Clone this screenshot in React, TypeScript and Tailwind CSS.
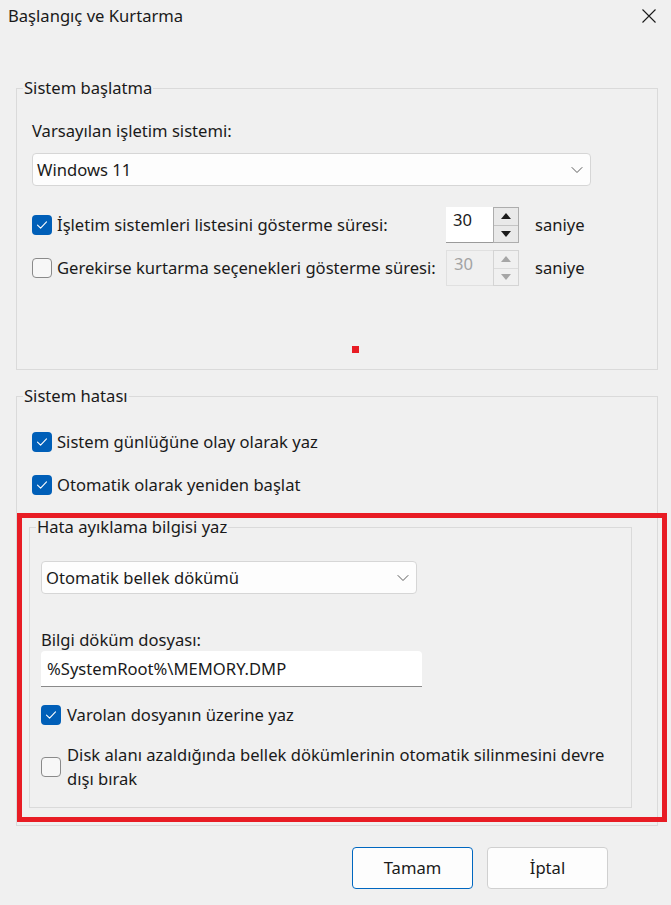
import React from "react";

function CheckBox({ checked }: { checked: boolean }) {
  if (checked) {
    return (
      <span className="flex h-[20px] w-[20px] shrink-0 items-center justify-center rounded-[4px] bg-[#005fb8]">
        <svg width="12" height="10" viewBox="0 0 12 10" fill="none">
          <path d="M1.5 5.2 L4.6 8.2 L10.5 1.8" stroke="#ffffff" strokeWidth="1.1" strokeLinecap="round" strokeLinejoin="round" />
        </svg>
      </span>
    );
  }
  return <span className="block h-[20px] w-[20px] shrink-0 rounded-[4px] border border-[#8a8a8a] bg-[#f7f7f7]" />;
}

function Chevron() {
  return (
    <svg width="12" height="8" viewBox="0 0 12 8" fill="none">
      <path d="M1 1.5 L6 6.5 L11 1.5" stroke="#5c5c5c" strokeWidth="1" strokeLinecap="round" strokeLinejoin="round" />
    </svg>
  );
}

function ComboBox({ value, width }: { value: string; width: string }) {
  return (
    <div className={`${width} flex h-[33px] items-center justify-between rounded-[4px] border border-[#d6d6d6] bg-[#fdfdfd] pl-[4px] pr-[7px]`}>
      <span>{value}</span>
      <Chevron />
    </div>
  );
}

function Spinner({ value, disabled }: { value: string; disabled?: boolean }) {
  const arrow = disabled ? "#a6a6a6" : "#1a1a1a";
  return (
    <div className="flex h-[36px]">
      <div
        className={`flex h-full w-[47px] items-start pl-[7px] pt-[2px] ${
          disabled ? "border border-r-0 border-[#e0e0e0] bg-[#f0f0f0] text-[#a3a3a3]" : "border-b border-[#9a9a9a] bg-white"
        }`}
      >
        {value}
      </div>
      <div className={`flex w-[26px] flex-col border ${disabled ? "border-[#d4d4d4]" : "border-[#adadad]"}`}>
        <div className={`flex flex-1 items-center justify-center border-b ${disabled ? "border-[#dcdcdc] bg-[#f0f0f0]" : "border-[#c4c4c4] bg-[#e9e9e9]"}`}>
          <svg width="10" height="6" viewBox="0 0 10 6">
            <path d="M0 6 L5 0 L10 6 Z" fill={arrow} />
          </svg>
        </div>
        <div className={`flex flex-1 items-center justify-center ${disabled ? "bg-[#f0f0f0]" : "bg-[#e9e9e9]"}`}>
          <svg width="10" height="6" viewBox="0 0 10 6">
            <path d="M0 0 L5 6 L10 0 Z" fill={arrow} />
          </svg>
        </div>
      </div>
    </div>
  );
}

export default function App() {
  return (
    <div className="relative h-[905px] w-[671px] overflow-hidden bg-[#f0f0f0] font-['Noto_Sans',sans-serif] text-[16.6px] leading-[22px] text-[#1a1a1a]">
      {/* title bar */}
      <div className="flex h-[31px] items-center justify-between pl-[8px] pr-[14px]">
        <span>Başlangıç ve Kurtarma</span>
        <svg width="16" height="16" viewBox="0 0 16 16" fill="none">
          <path d="M1.5 1.5 L14.5 14.5 M14.5 1.5 L1.5 14.5" stroke="#1a1a1a" strokeWidth="1.1" />
        </svg>
      </div>

      {/* Sistem başlatma */}
      <fieldset className="ml-[16px] mt-[46px] w-[642px] border border-[#dadada]">
        <legend className="ml-[6px] px-[1px] leading-[22px]">Sistem başlatma</legend>
        <div className="pl-[15px] pb-[16px]">
          <div className="mt-[21px] h-[22px]">Varsayılan işletim sistemi:</div>
          <div className="mt-[11px]">
            <ComboBox value="Windows 11" width="w-[559px]" />
          </div>
          <div className="mt-[21px] flex items-center">
            <CheckBox checked />
            <span className="ml-[5px] w-[389px]">İşletim sistemleri listesini gösterme süresi:</span>
            <Spinner value="30" />
            <span className="ml-[16px]">saniye</span>
          </div>
          <div className="mt-[7px] flex items-center">
            <CheckBox checked={false} />
            <span className="ml-[5px] w-[389px]">Gerekirse kurtarma seçenekleri gösterme süresi:</span>
            <Spinner value="30" disabled />
            <span className="ml-[16px]">saniye</span>
          </div>
          <div className="ml-[320px] mt-[60px] h-[7px] w-[7px] bg-[#e81c24]" />
        </div>
      </fieldset>

      {/* Sistem hatası */}
      <fieldset className="ml-[16px] mt-[15px] w-[642px] border border-[#dadada]">
        <legend className="ml-[6px] px-[1px] leading-[22px]">Sistem hatası</legend>
        <div className="pb-[17px]">
          <div className="ml-[15px] mt-[23px] flex h-[24px] items-center">
            <CheckBox checked />
            <span className="ml-[5px]">Sistem günlüğüne olay olarak yaz</span>
          </div>
          <div className="ml-[15px] mt-[19px] flex h-[24px] items-center">
            <CheckBox checked />
            <span className="ml-[5px]">Otomatik olarak yeniden başlat</span>
          </div>

          <fieldset className="ml-[12px] mt-[19px] w-[603px] border border-[#dadada]">
            <legend className="ml-[6px] px-[1px] leading-[22px]">Hata ayıklama bilgisi yaz</legend>
            <div className="pl-[11px] pb-[16px]">
              <div className="mt-[23px]">
                <ComboBox value="Otomatik bellek dökümü" width="w-[376px]" />
              </div>
              <div className="mt-[35px] h-[22px]">Bilgi döküm dosyası:</div>
              <div className="flex h-[36px] w-[381px] items-center rounded-t-[4px] border-b border-[#8a8a8a] bg-white pl-[6px]">
                %SystemRoot%\MEMORY.DMP
              </div>
              <div className="mt-[16px] flex h-[24px] items-center">
                <CheckBox checked />
                <span className="ml-[6px]">Varolan dosyanın üzerine yaz</span>
              </div>
              <div className="mt-[16px] flex items-center">
                <CheckBox checked={false} />
                <span className="ml-[6px] leading-[24px]">
                  Disk alanı azaldığında bellek dökümlerinin otomatik silinmesini devre
                  <br />
                  dışı bırak
                </span>
              </div>
            </div>
          </fieldset>
        </div>
      </fieldset>

      {/* buttons */}
      <div className="mt-[21px] flex justify-end gap-[14px] pr-[63px]">
        <button className="h-[42px] w-[121px] rounded-[4px] border border-[#0067c0] bg-[#fdfdfd]">Tamam</button>
        <button className="h-[42px] w-[121px] rounded-[4px] border border-[#d0d0d0] bg-[#fdfdfd]">İptal</button>
      </div>

      {/* highlight annotation */}
      <div className="pointer-events-none absolute left-[17px] top-[513px] h-[309px] w-[650px] border-[5px] border-[#e81c24]" />
    </div>
  );
}
